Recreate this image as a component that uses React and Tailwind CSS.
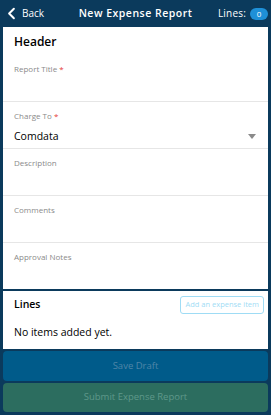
import React from 'react';
import { ChevronLeft } from 'lucide-react';

function Field({ label, required, value, caret, last }) {
  return (
    <div className={`pl-[11px] ${last ? '' : 'border-b border-[#e6e6e6]'}`}>
      <div className="h-[46px] pt-[9px] pr-[11px]">
        <div className="text-[8px] leading-[10px] text-[#8a8a8a]">
          {label}
          {required && <span className="text-[#e53935]"> *</span>}
        </div>
        {value && (
          <div className="flex items-center justify-between mt-[8px]">
            <span className="text-[10.5px] leading-[14px] text-black">{value}</span>
            {caret && (
              <svg width="8" height="5" viewBox="0 0 8 5" className="mr-[1px]">
                <path d="M0 0h8L4 5z" fill="#8a8a8a" />
              </svg>
            )}
          </div>
        )}
      </div>
    </div>
  );
}

export default function App() {
  return (
    <div
      className="w-[271px] h-[415px] bg-[#0b3a5c] flex flex-col overflow-hidden"
      style={{ fontFamily: '"Open Sans", "Noto Sans", sans-serif' }}
    >
      <div className="h-[27px] flex items-center px-[3px] text-white">
        <div className="flex items-center w-[70px]">
          <ChevronLeft size={19} strokeWidth={2.5} className="-ml-[1px]" />
          <span className="text-[10px] ml-[1px]">Back</span>
        </div>
        <div className="flex-1 text-center text-[10.5px] font-semibold tracking-[0.5px]">
          New Expense Report
        </div>
        <div className="flex items-center justify-end w-[70px]">
          <span className="text-[10px] tracking-[0.2px]">Lines:</span>
          <span className="ml-[4px] h-[12px] w-[18px] rounded-full bg-[#1e90d8] text-[8px] flex items-center justify-center">0</span>
        </div>
      </div>

      <div className="mx-[3px] bg-white">
        <div className="px-[11px] pt-[6px] h-[28px] text-[12px] font-semibold text-black">Header</div>
        <Field label="Report Title" required />
        <Field label="Charge To" required value="Comdata" caret />
        <Field label="Description" />
        <Field label="Comments" />
        <Field label="Approval Notes" last />
      </div>

      <div className="mx-[3px] mt-[2px] bg-white h-[58px] px-[11px] pt-[5px]">
        <div className="flex items-center justify-between">
          <span className="text-[10.5px] font-semibold text-black">Lines</span>
          <span className="border border-[#9fdcf5] rounded-[3px] px-[4px] h-[18px] flex items-center text-[7.5px] text-[#9fdcf5] -mr-[7px]">
            Add an expense item
          </span>
        </div>
        <div className="mt-[11px] text-[10.5px] text-black">No items added yet.</div>
      </div>

      <div className="mx-[3px] mt-[2px] h-[30px] rounded-[4px] bg-[#005b8a] flex items-center justify-center text-[9.5px] text-[#4f86a8]">
        Save Draft
      </div>
      <div className="mx-[3px] mt-[2px] h-[29px] rounded-[4px] bg-[#2c6d5f] flex items-center justify-center text-[9.5px] text-[#5f988a]">
        Submit Expense Report
      </div>
    </div>
  );
}
